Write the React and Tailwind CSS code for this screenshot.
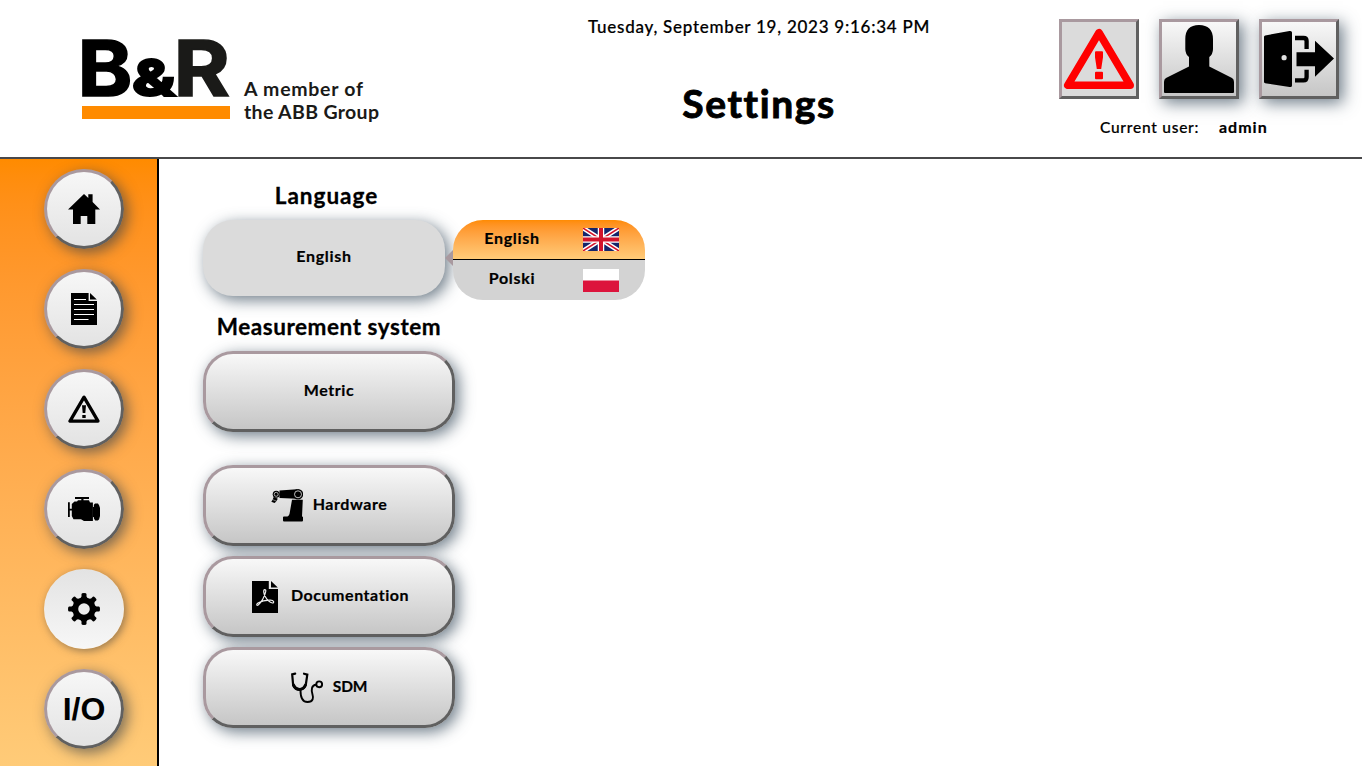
import React from "react";

function AlertShape({ className, color }) {
  return (
    <svg viewBox="0 0 74 74" className={className}>
      <path d="M37 10.8 5.8 63.200H68.2Z" fill="none" stroke={color} strokeWidth="7.6" strokeLinejoin="round" />
      <path d="M33 30.300q0-1 1-1h6q1 0 1 1v5L39.200 47H34.800L33 35.300ZM33 50.800q0-1 1-1h6q1 0 1 1v5.500q0 1-1 1h-6q-1 0-1-1Z" fill={color} />
    </svg>
  );
}

function PersonShape() {
  return (
    <svg viewBox="0 0 74 74" className="size-[74px]">
      <path d="M23.3 17Q23.3 3 37 3T51 17V27Q51 32 47.3 35V44.5L70 56Q72 57 72 60V70Q72 71 71 71H3Q2 71 2 70V60Q2 57 4 56L27 44.5V35Q23.3 32 23.3 27Z" />
    </svg>
  );
}

function ExitShape() {
  return (
    <svg viewBox="0 0 74 74" className="size-[74px]">
      <path fillRule="evenodd" d="M2 15Q2 13.8 3.2 13.5L27.5 9Q30 8.6 30 10.5V63.500Q30 65.500 27.500 65L3.200 61.300Q2 61 2 60ZM24.700 35.700A2.600 2.600 0 1 0 19.500 35.700A2.600 2.600 0 1 0 24.700 35.700Z" />
      <path d="M33 16H41.500Q44.600 16 44.600 19V27M44.600 47.700V55Q44.600 58.400 41.500 58.400H33" fill="none" stroke="#000" strokeWidth="4.300" />
      <path d="M34.500 30.300H53V18.700L72 36.500 53 54.700V44.300H34.500Z" />
    </svg>
  );
}

function HomeShape() {
  return (
    <svg viewBox="0 0 32 32" className="size-8">
      <path d="M16 1 20.300 5V1.300H24.600V9L32 16.500H27.300V31H19.300V23H12.700V31H5V16.500H0Z" />
    </svg>
  );
}

function PageShape() {
  return (
    <svg viewBox="0 0 32 32" className="size-8">
      <path d="M3 0H20.600V8H29V32H3ZM22 0 28.800 6.500H22Z" />
      <path d="M6 6.500H18M6 11.500H26M6 16.500H26M6 21.500H26M6 26.500H20.500" stroke="#fff" strokeWidth="1.100" />
    </svg>
  );
}

function WarningShape() {
  return (
    <svg viewBox="0 0 32 32" className="size-8">
      <path d="M16 4.200 2 28.100H30Z" fill="none" stroke="#000" strokeWidth="3.300" strokeLinejoin="round" />
      <path d="M14 12.300H18L17.300 20H14.700ZM14.300 21.900H17.700V25H14.300Z" />
    </svg>
  );
}

function EngineShape() {
  return (
    <svg viewBox="0 0 32 32" className="size-8">
      <path d="M7 4H21V6H15.500V7.200H21L22 9.500H24.900V28H16L13 26.200H5.500L3.800 23V17.500H1.800V24H0V9.300H1.800V15.800H3.800V11L6.500 8.500H9L10 7.200H13.300V6H7Z" />
      <path d="M24.800 13 27 10.500H30L31.200 12.500 32 15V23L31 26.500 29.800 27.500H27.200L25.600 25 24.800 24Z" />
      <path d="M25.500 10V14M25.500 24V28" stroke="#eee" strokeWidth=".8" />
    </svg>
  );
}

function GearShape() {
  const angles = [0, 45, 90, 135, 180, 225, 270, 315];
  return (
    <svg viewBox="0 0 32 32" className="size-8">
      <circle cx="16" cy="16" r="8.700" fill="none" stroke="#000" strokeWidth="5.800" />
      {angles.map((a) => (
        <path key={a} transform={`rotate(${a} 16 16)`} d="M11.500 6.500 13.500 3.500V1Q13.500 0 16 0T18.500 1V3.500L20.500 6.500Z" />
      ))}
    </svg>
  );
}

function RobotShape() {
  return (
    <svg viewBox="0 0 32 33" className="h-[33px] w-8">
      <path d="M8.500 1.500 26 .3V9.800L8.500 9Z" />
      <circle cx="27" cy="5.300" r="5.200" />
      <circle cx="27" cy="5.300" r="3.500" fill="none" stroke="#eee" strokeWidth=".8" />
      <circle cx="5.200" cy="5.300" r="3.500" />
      <circle cx="5.200" cy="5.300" r="2" fill="none" stroke="#eee" strokeWidth=".7" />
      <path d="M2.800 7.800 6.800 9.800 5 12.700 3.500 14 .3 12.800 1.500 11Z" />
      <path d="M1.500 10.500 5.500 12.200" stroke="#eee" strokeWidth=".5" />
      <path d="M21 10.800H31.800L31 27.500H31.200Q32 27.500 32 28.300V31.500Q32 32.400 31 32.400H13Q12 32.400 12 31.500V28.300Q12 27.500 13 27.500H16.500Q18 26.500 18.500 25Z" />
    </svg>
  );
}

function PdfShape() {
  return (
    <svg viewBox="0 0 32 32" className="size-8">
      <path d="M3 0H19.800V8H29V32H3ZM22 0 28.800 6.500H22Z" />
      <path d="M15.700 8.600C13.800 9 15 13.500 16.200 15.500C18 18.800 20.500 21.200 23.500 22C25.500 22 25 19.200 21.500 19.100C17.500 19 12.500 20 9 22C7 23.500 7.500 25 9.200 24C12.500 21.500 15.800 15 16.700 10.700C17 9.300 16.600 8.600 15.700 8.600Z" fill="none" stroke="#eee" strokeWidth="1.200" />
    </svg>
  );
}

function StethoscopeShape() {
  return (
    <svg viewBox="0 0 32 32" className="size-8">
      <g fill="none" stroke="#000" strokeLinecap="round">
        <path d="M4.200 1.700 1.200 2.300 2 11.500Q3 17 8.500 17.500Q14 17 15 11.500L16.300 2.600 13 1.700" strokeWidth="2.200" />
        <path d="M2.400 13Q4.500 17.400 8.500 17.400T14.500 13" strokeWidth="3" />
        <path d="M9.500 18.500Q9.500 30 16.500 30C22.500 30 22.500 25.500 21.500 22.500C20 18 20.500 13 25 12.700" strokeWidth="1.900" />
        <circle cx="28.200" cy="12.300" r="2.900" strokeWidth="1.900" />
      </g>
    </svg>
  );
}

function Logo() {
  return (
    <svg viewBox="0 0 310 120" className="h-[120px] w-[320px] shrink-0 overflow-visible" preserveAspectRatio="xMinYMin">
      <g fontFamily="Inter, sans-serif" fontWeight="700">
        <text x="-4.500" y="80.500" fontSize="77.500" textLength="55" lengthAdjust="spacingAndGlyphs" stroke="#000" strokeWidth="1.500">B</text>
        <text x="50" y="80.500" fontSize="51" fontWeight="800" textLength="43.500" lengthAdjust="spacingAndGlyphs" stroke="#000" strokeWidth="2">&amp;</text>
        <text x="91.500" y="80.500" fontSize="77.500" textLength="56.500" lengthAdjust="spacingAndGlyphs" fill="#1a1a18" stroke="#1a1a18" strokeWidth="1.500">R</text>
      </g>
      <path d="M0 91H148V104H0Z" fill="#ff8b00" />
      <g fontFamily="Lato, sans-serif" fontWeight="700" fontSize="19.500" fill="#1a1a18">
        <text x="162" y="80.500" textLength="119">A member of</text>
        <text x="162" y="104" textLength="135">the ABB Group</text>
      </g>
    </svg>
  );
}

const raised =
  "border-[3px] border-t-[#a9999f] border-l-[#a9999f] border-r-[#606060] border-b-[#606060]";

const label = "text-[16px] leading-5 font-bold tracking-[0.55px] [-webkit-text-stroke:0.2px_#000]";

const heading =
  "text-center text-[22.5px] leading-[30px] font-bold tracking-[0.55px] [-webkit-text-stroke:0.3px_#000]";

function NavButton({ children, active }) {
  return (
    <button
      className={
        active
          ? "flex size-20 shrink-0 items-center justify-center rounded-full bg-linear-to-b from-[#e3e3e3] to-[#f7f7f7] shadow-[2px_2px_8px_rgba(60,60,60,0.55)]"
          : `flex size-20 shrink-0 items-center justify-center rounded-full bg-linear-to-b from-[#f7f7f7] to-[#e3e3e3] shadow-[4px_4px_14px_rgba(55,65,75,0.65)] ${raised}`
      }
    >
      {children}
    </button>
  );
}

function WideButton({ icon, children, textClass = label }) {
  return (
    <button
      className={`flex h-[81px] w-[252px] shrink-0 items-center justify-center gap-2.5 rounded-[30px] bg-linear-to-b from-[#f8f8f8] to-[#c6c6c6] shadow-[4px_4px_15px_rgba(55,75,92,0.72)] ${raised}`}
    >
      {icon}
      <span className={`pb-[3px] ${textClass}`}>{children}</span>
    </button>
  );
}

function BritishFlag() {
  return (
    <svg viewBox="0 0 36 23" className="h-[23px] w-9">
      <path d="M0 0H36V23H0Z" fill="#15256b" />
      <path d="M0 0 36 23M36 0 0 23" stroke="#fff" strokeWidth="4.600" />
      <path d="M0 0 36 23M36 0 0 23" stroke="#d2142c" strokeWidth="1.500" />
      <path d="M18 0V23M0 11.500H36" stroke="#fff" strokeWidth="6.500" />
      <path d="M18 0V23M0 11.500H36" stroke="#d2142c" strokeWidth="4" />
    </svg>
  );
}

function PolishFlag() {
  return (
    <svg viewBox="0 0 36 23" className="h-[23px] w-9">
      <path d="M0 0H36V23H0Z" fill="#fff" />
      <path d="M0 11.500H36V23H0Z" fill="#dc143c" />
    </svg>
  );
}

export default function App() {
  return (
    <div className="flex h-[766px] w-[1362px] flex-col overflow-hidden bg-white font-['Lato','Noto_Sans',sans-serif] text-black [font-variant-ligatures:none]">
      <header className="grid h-[159px] shrink-0 grid-cols-[505px_508px_1fr] border-b-2 border-[#48484a]">
        <div className="pt-[15px] pl-[82px]">
          <Logo />
        </div>
        <div className="flex flex-col items-center pt-[15px]">
          <div className="text-[17px] leading-6 font-medium tracking-[0.74px] whitespace-nowrap [-webkit-text-stroke:0.2px_#000]">Tuesday, September 19, 2023 9:16:34 PM</div>
          <h1 className="mt-10 text-[39px] leading-[48px] font-bold tracking-[1.6px] [-webkit-text-stroke:0.9px_#000]">Settings</h1>
        </div>
        <div className="pt-[19px] pl-[46px]">
          <div className="flex gap-5">
            <button className={`size-20 bg-[#dbdbdb] ${raised}`}>
              <AlertShape className="size-[74px]" color="#ff0000" />
            </button>
            <button className={`size-20 bg-linear-to-b from-[#f8f8f8] to-[#c6c6c6] shadow-[4px_4px_15px_rgba(55,75,92,0.72)] ${raised}`}>
              <PersonShape />
            </button>
            <button className={`size-20 bg-linear-to-b from-[#f8f8f8] to-[#c6c6c6] shadow-[4px_4px_15px_rgba(55,75,92,0.72)] ${raised}`}>
              <ExitShape />
            </button>
          </div>
          <div className="mt-[18px] flex pl-[41px] text-[15.5px] leading-5">
            <span className="w-[119px] font-medium tracking-[0.75px] [-webkit-text-stroke:0.2px_#000]">Current user:</span>
            <span className="text-[16px] font-bold tracking-[1px] [-webkit-text-stroke:0.2px_#000]">admin</span>
          </div>
        </div>
      </header>
      <div className="flex min-h-0 flex-1">
        <nav className="flex w-[159px] shrink-0 flex-col gap-5 border-r-2 border-black bg-linear-to-b from-[#ff8b00] to-[#ffcb78] pt-2.5 pl-11">
          <NavButton><HomeShape /></NavButton>
          <NavButton><PageShape /></NavButton>
          <NavButton><WarningShape /></NavButton>
          <NavButton><EngineShape /></NavButton>
          <NavButton active><GearShape /></NavButton>
          <NavButton>
            <span className="font-['Liberation_Sans',sans-serif] text-[32px] leading-8 font-bold">I/O</span>
          </NavButton>
        </nav>
        <main className="flex flex-col items-start pl-11">
          <h2 className={`mt-[22px] w-[247px] ${heading}`}>
            <span className="tracking-[1px]">Language</span>
          </h2>
          <div className="mt-[9px] flex items-start">
            <button className={`h-[76px] w-[242px] rounded-[30px] bg-[#dbdbdb] pb-[5px] shadow-[4px_4px_15px_rgba(55,75,92,0.72)] ${label}`}>
              <span className="tracking-[0.7px]">English</span>
            </button>
            <svg viewBox="0 0 8 16" className="mt-[30px] h-4 w-2">
              <path d="M0 8 8 0V16Z" fill="#a9999f" />
            </svg>
            <ul className={`h-20 w-48 overflow-hidden rounded-[30px] ${label}`}>
              <li className="flex h-10 items-center border-b border-black bg-linear-to-b from-[#ff8b00] to-[#ffcb78]">
                <span className="mr-3 w-[118px] pb-[3px] text-center tracking-[0.7px]">English</span>
                <BritishFlag />
              </li>
              <li className="flex h-10 items-center bg-[#d3d3d3]">
                <span className="mr-3 w-[118px] pb-[4px] text-center tracking-[0.7px]">Polski</span>
                <PolishFlag />
              </li>
            </ul>
          </div>
          <h2 className={`mt-3 w-[252px] ${heading}`}>Measurement system</h2>
          <div className="mt-[9px] flex flex-col">
            <WideButton>Metric</WideButton>
            <div className="mt-[33px] flex flex-col gap-2.5">
              <WideButton icon={<RobotShape />}>Hardware</WideButton>
              <WideButton icon={<PdfShape />}>Documentation</WideButton>
              <WideButton icon={<StethoscopeShape />} textClass="text-[15.5px] leading-5 font-bold tracking-[-0.2px] [-webkit-text-stroke:0.2px_#000]">SDM</WideButton>
            </div>
          </div>
        </main>
      </div>
    </div>
  );
}
